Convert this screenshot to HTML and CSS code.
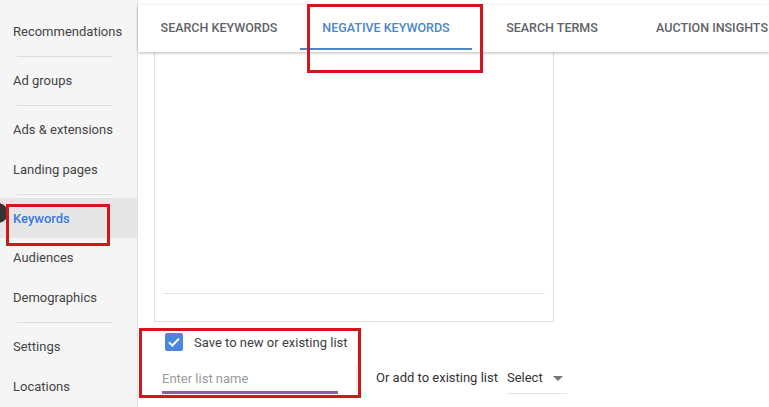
FILE: index.html
```html
<!DOCTYPE html>
<html lang="en">
<head>
    <meta charset="UTF-8">
    <title>Keywords</title>
    <link rel="stylesheet" href="styles.css">
</head>
<body>
    <div class="page">
        <!-- Left navigation -->
        <nav class="sidebar">
            <div class="nav-item">Recommendations</div>
            <div class="nav-divider"></div>
            <div class="nav-item">Ad groups</div>
            <div class="nav-divider"></div>
            <div class="nav-item">Ads &amp; extensions</div>
            <div class="nav-item">Landing pages</div>
            <div class="nav-divider"></div>
            <div class="nav-item active">Keywords</div>
            <div class="nav-item">Audiences</div>
            <div class="nav-item">Demographics</div>
            <div class="nav-divider"></div>
            <div class="nav-item">Settings</div>
            <div class="nav-item">Locations</div>
        </nav>

        <main class="main">
            <div class="tabs">
                <div class="tab tab-search">SEARCH KEYWORDS</div>
                <div class="tab tab-negative selected">NEGATIVE KEYWORDS</div>
                <div class="tab">SEARCH TERMS</div>
                <div class="tab">AUCTION INSIGHTS</div>
            </div>

            <div class="content">
                <div class="card">
                    <div class="card-line"></div>
                </div>

                <label class="check-row">
                    <span class="checkbox">
                        <svg width="18" height="18" viewBox="0 0 18 18">
                            <path d="M4 9.2 L7.4 12.5 L14 5.6" fill="none" stroke="#fff" stroke-width="2"/>
                        </svg>
                    </span>
                    <span>Save to new or existing list</span>
                </label>

                <div class="list-row">
                    <div class="list-input">
                        <span class="placeholder">Enter list name</span>
                    </div>
                    <span class="resize-bar"></span>
                    <span class="or-label">Or add to existing list</span>
                    <div class="select">
                        <span>Select</span>
                        <span class="caret"></span>
                    </div>
                </div>
            </div>
        </main>
    </div>

    <!-- collapse handle + annotations -->
    <div class="handle"></div>
    <div class="mark mark-keywords"></div>
    <div class="mark mark-tab"></div>
    <div class="mark mark-form"></div>
</body>
</html>
```

FILE: styles.css
```css
body {
    margin: 0;
    font-family: Roboto, "Liberation Sans", Arial, sans-serif;
    font-size: 13px;
    color: #3c4043;
    background: #fff;
    overflow: hidden;
}
.page {
    display: flex;
    height: 407px;
}

/* sidebar */
.sidebar {
    width: 137px;
    flex-shrink: 0;
    background: #f5f5f5;
    border-right: 1px solid #e0e0e0;
    padding-top: 12px;
    display: flex;
    flex-direction: column;
}
.nav-item {
    height: 40px;
    line-height: 40px;
    padding-left: 13px;
    color: #444;
    white-space: nowrap;
}
.nav-item.active {
    background: #e6e6e6;
    color: #3b78e7;
    font-weight: 500;
    line-height: 41px;
}
.nav-divider {
    height: 1px;
    margin: 4px 25px 4px 17px;
    background: #dcdcdc;
}

/* main */
.main {
    flex: 1;
    display: flex;
    flex-direction: column;
    background: #fff;
    min-width: 0;
}
.tabs {
    margin-top: 5px;
    height: 47px;
    display: flex;
    background: #fff;
    box-shadow: 0 1px 3px rgba(0,0,0,0.28);
    position: relative;
    z-index: 1;
    white-space: nowrap;
}
.tab {
    width: 160px;
    flex-shrink: 0;
    display: flex;
    align-items: center;
    justify-content: center;
    font-size: 12.5px;
    font-weight: 500;
    color: #5f6368;
    border-bottom: 2px solid transparent;
    height: 45px;
    padding-top: 2px;
    box-sizing: border-box;
}
.tab-search {
    width: 162px;
}
.tab-negative {
    width: 172px;
}
.tab.selected {
    color: #4a86c8;
    border-bottom-color: #4a86c8;
}

.content {
    padding-left: 16px;
}
.card {
    width: 398px;
    height: 269px;
    border: 1px solid #dedede;
    border-top: none;
    display: flex;
    flex-direction: column;
    justify-content: flex-end;
}
.card-line {
    height: 1px;
    background: #e2e2e2;
    margin: 0 8px 27px 8px;
}

.check-row {
    display: flex;
    align-items: center;
    gap: 11px;
    margin: 10px 0 0 11px;
    height: 20px;
}
.checkbox {
    width: 18px;
    height: 18px;
    border-radius: 2px;
    background: #4a86e0;
    display: flex;
}

.list-row {
    display: flex;
    align-items: flex-start;
    margin-top: 13px;
    padding-left: 8px;
}
.list-input {
    width: 176px;
    height: 26px;
    border-bottom: 3px solid #8e5d9a;
    display: flex;
    align-items: center;
}
.placeholder {
    color: #9a9a9a;
}
.resize-bar {
    width: 1px;
    height: 27px;
    background: #e8e8e8;
    margin: 0 19px 0 18px;
}
.or-label {
    color: #333;
    line-height: 26px;
}
.select {
    margin-left: 9px;
    width: 60px;
    height: 28px;
    border-bottom: 1px solid #e4e4e4;
    display: flex;
    align-items: flex-start;
    line-height: 26px;
    color: #333;
}
.caret {
    margin: 11px 0 0 10px;
    width: 0;
    height: 0;
    border-left: 5px solid transparent;
    border-right: 5px solid transparent;
    border-top: 5px solid #777;
}

/* overlays */
.handle {
    position: absolute;
    left: -12px;
    top: 203px;
    width: 20px;
    height: 20px;
    border-radius: 50%;
    background: #333;
}
.mark {
    position: absolute;
    border: 3px solid #d2161b;
    box-sizing: border-box;
}
.mark-keywords {
    left: 6px;
    top: 204px;
    width: 104px;
    height: 42px;
}
.mark-tab {
    left: 307px;
    top: 4px;
    width: 176px;
    height: 69px;
    z-index: 2;
}
.mark-form {
    left: 139px;
    top: 328px;
    width: 222px;
    height: 70px;
}
```
